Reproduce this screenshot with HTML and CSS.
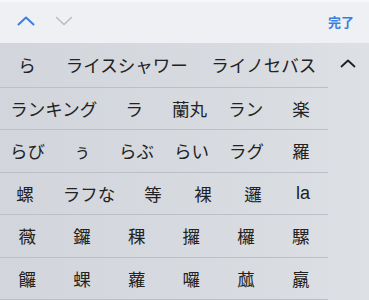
FILE: index.html
```html
<!DOCTYPE html>
<html lang="ja">
<head>
  <meta charset="utf-8">
  <title>候補</title>
  <link rel="stylesheet" href="styles.css">
</head>
<body>

  <div class="toolbar">
    <div class="arrows">
      <svg class="arrow" width="18" height="10" viewBox="0 0 18 10"><path d="M1.5 8.5 L9 1.5 L16.5 8.5" fill="none" stroke="#3c7ee0" stroke-width="2" stroke-linecap="round" stroke-linejoin="round"/></svg>
      <svg class="arrow" width="18" height="10" viewBox="0 0 18 10"><path d="M1.5 1.5 L9 8.5 L16.5 1.5" fill="none" stroke="#b8bcc3" stroke-width="1.6" stroke-linecap="round" stroke-linejoin="round"/></svg>
    </div>
    <span class="done">完了</span>
  </div>

  <div class="candidates">
    <div class="list">
      <div class="row first">
        <span class="cell">ら</span>
        <span class="cell">ライスシャワー</span>
        <span class="cell">ライノセバス</span>
      </div>
      <div class="row">
        <span class="cell">ランキング</span>
        <span class="cell">ラ</span>
        <span class="cell">蘭丸</span>
        <span class="cell">ラン</span>
        <span class="cell">楽</span>
      </div>
      <div class="row">
        <span class="cell">らび</span>
        <span class="cell">ぅ</span>
        <span class="cell">らぶ</span>
        <span class="cell">らい</span>
        <span class="cell">ラグ</span>
        <span class="cell">羅</span>
      </div>
      <div class="row loose">
        <span class="cell">螺</span>
        <span class="cell">ラフな</span>
        <span class="cell">等</span>
        <span class="cell">裸</span>
        <span class="cell">邏</span>
        <span class="cell latin">la</span>
      </div>
      <div class="row">
        <span class="cell">薇</span>
        <span class="cell">鑼</span>
        <span class="cell">稞</span>
        <span class="cell">攞</span>
        <span class="cell">欏</span>
        <span class="cell">騾</span>
      </div>
      <div class="row">
        <span class="cell">饠</span>
        <span class="cell">蜾</span>
        <span class="cell">蘿</span>
        <span class="cell">囉</span>
        <span class="cell">蓏</span>
        <span class="cell">羸</span>
      </div>
    </div>
    <div class="side">
      <svg width="16" height="9" viewBox="0 0 16 9"><path d="M1.5 7.5 L8 1.5 L14.5 7.5" fill="none" stroke="#1f1f1f" stroke-width="1.8" stroke-linecap="round" stroke-linejoin="round"/></svg>
    </div>
  </div>

</body>
</html>
```

FILE: styles.css
```css
body {
  margin: 0;
  width: 369px;
  height: 300px;
  overflow: hidden;
  font-family: "Noto Sans CJK JP", "Noto Sans", sans-serif;
  background-color: #d3d6db;
}

.toolbar {
  height: 43px;
  box-sizing: border-box;
  border-top: 2px solid #f7f8fa;
  background-color: #eef0f4;
  display: flex;
  align-items: center;
  justify-content: space-between;
  padding: 0 15px 0 17px;
}

.arrows {
  display: flex;
  gap: 20px;
  margin-top: -3px;
}

.arrow {
  display: block;
}

.done {
  color: #3c7ee0;
  font-size: 13px;
  font-weight: bold;
  margin-top: -2px;
}

.candidates {
  display: flex;
  height: 257px;
  background: linear-gradient(to right, #d2d5db, #d8dbe0 70%, #dde0e4);
}

.list {
  width: 328px;
  display: flex;
  flex-direction: column;
}

.row {
  display: flex;
  height: 42.6px;
  box-sizing: border-box;
  border-bottom: 1px solid #bcc0c6;
}

.row.first {
  height: 45px;
}

.cell {
  flex: 1 1 auto;
  min-width: 54px;
  box-sizing: border-box;
  padding: 0 11px;
  display: flex;
  align-items: center;
  justify-content: center;
  font-size: 17.5px;
  color: #222;
  white-space: nowrap;
}

.row.loose .cell {
  min-width: 50px;
}

.latin {
  font-family: "Liberation Sans", sans-serif;
  font-size: 18px;
}

.side {
  flex: 1;
  display: flex;
  justify-content: center;
  padding-top: 16px;
  padding-right: 2px;
}

.side svg {
  display: block;
}
```
